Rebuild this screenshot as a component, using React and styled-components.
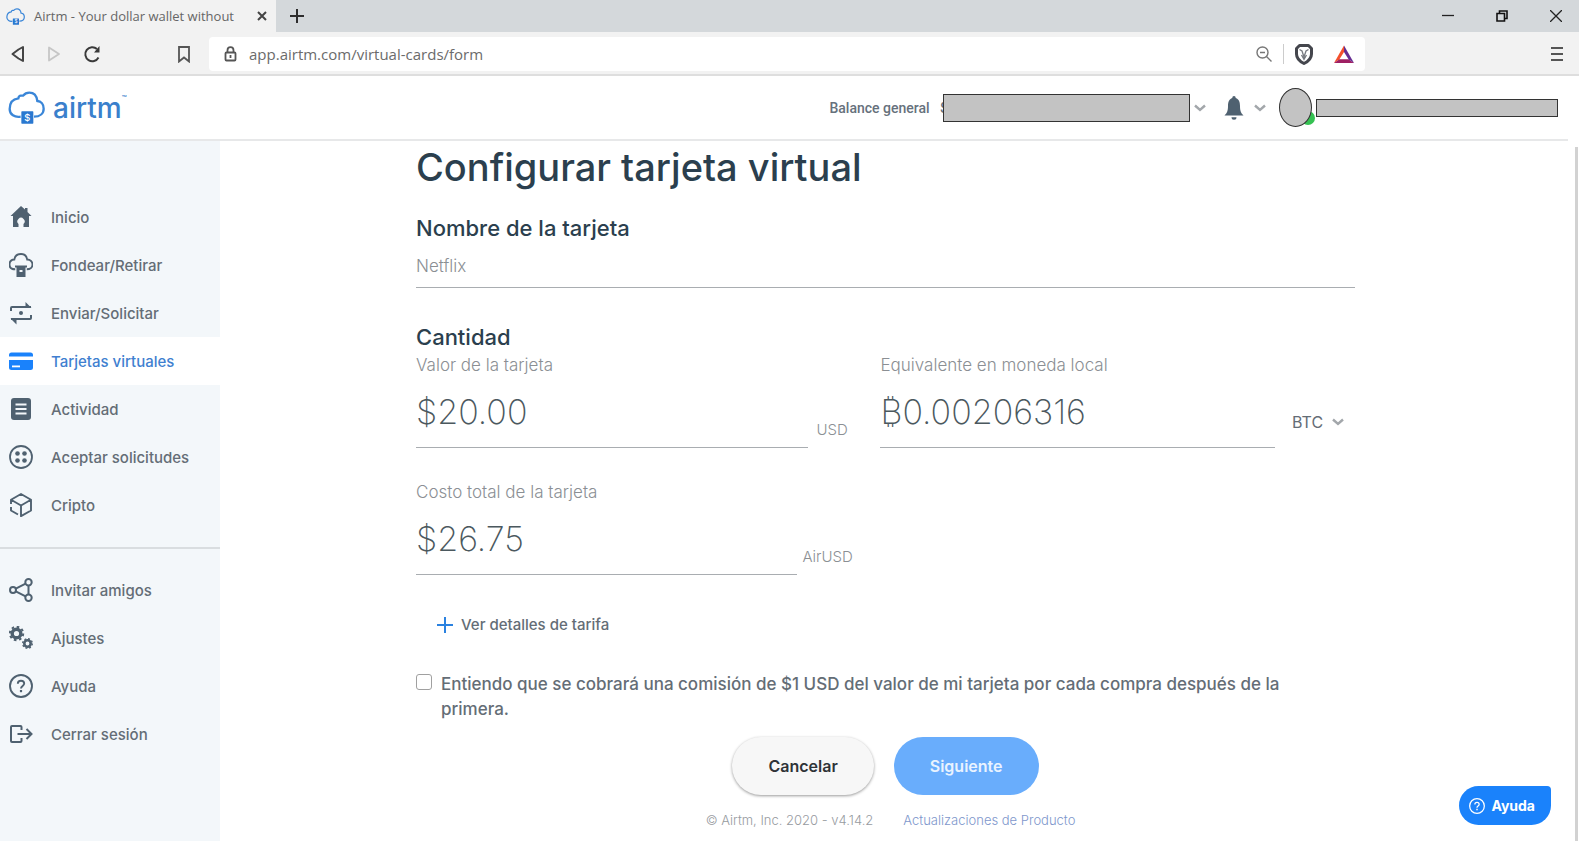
import React, { useState } from "react";
import styled, { createGlobalStyle } from "styled-components";

const colors = {
  blue: "#1a82fb",
  link: "#3f7fd0",
  dark: "#2b3f4e",
  icon: "#4f6170",
  text: "#646d76",
  light: "#8b8f94",
  line: "#a9adb1",
};

const CloudLogo = ({ width, height }) => (
  <svg width={width} height={height} viewBox="0 0 111 99" fill="none" aria-hidden="true">
    <path
      d="M38 77C20 80 5 71 5 54C5 36 14 24 31 22C32 17 34 14 38 14H45C50 8 56 5 64 5C77 5 86 14 88 30C99 31 107 40 107 53C107 67 96 77 78 77"
      stroke="#3a86d8"
      strokeWidth="7"
    />
    <rect x="40" y="61" width="36" height="37" rx="2" fill="#2a78d0" />
    <text x="58" y="90" fill="#fff" fontSize="28" fontFamily="Inter, sans-serif" textAnchor="middle">
      $
    </text>
  </svg>
);

const Chevron = () => (
  <svg width="12" height="8" viewBox="0 0 12 8" fill="none" stroke="#a3a7ab" strokeWidth="2.400" aria-hidden="true">
    <path d="M1 1.500L6 6L11 1.500" />
  </svg>
);

const icons = {
  home: (
    <g fill="currentColor">
      <path d="M12 1L1.500 11H4v11h5.500v-3a3.600 3.600 0 1 1 5 0v3H20V11h2.500L18.500 7V3H16v1.600z" />
    </g>
  ),
  fund: (
    <g fill="none" stroke="currentColor" strokeWidth="2">
      <path d="M6.500 17C3 17 .5 15.200 .5 12C.5 9 2.600 7 5.500 6.800C6 3 9 1 12.500 1C16 1 18.500 3.400 19 6.800C22 7 24.500 9 24.500 12C24.500 15 22 17 18.500 17" transform="scale(.96)" />
      <path d="M6 13.500h12" />
      <path d="M8.500 14v9h7v-9" fill="currentColor" />
      <path d="M10.500 18h3" stroke="#f3f7fa" />
    </g>
  ),
  send: (
    <g fill="none" stroke="currentColor" strokeWidth="2">
      <path d="M2 10V7a1 1 0 0 1 1-1H22" />
      <path d="M16.500 1l6 6h-6z" fill="currentColor" stroke="none" />
      <path d="M22 14v3a1 1 0 0 1-1 1H2" />
      <path d="M7.500 23.500l-6-6h6z" fill="currentColor" stroke="none" />
      <circle cx="12" cy="12" r="2" fill="currentColor" stroke="none" />
    </g>
  ),
  card: (
    <g fill="currentColor">
      <path d="M0 7.500V6a2.500 2.500 0 0 1 2.500-2.500h19A2.500 2.500 0 0 1 24 6v1.500z" />
      <path d="M0 11h24v7.500a2.500 2.500 0 0 1-2.500 2.500h-19A2.500 2.500 0 0 1 0 18.500z" />
      <path d="M3 16.500h8v1.800H3z" fill="#fff" />
    </g>
  ),
  activity: (
    <g>
      <rect x="2" y="1" width="20" height="22" rx="3" fill="currentColor" />
      <path d="M6.500 7.500h11M6.500 12h11M6.500 16.500h11" stroke="#f3f7fa" strokeWidth="1.800" />
    </g>
  ),
  requests: (
    <g fill="currentColor">
      <circle cx="12" cy="12" r="11" fill="none" stroke="currentColor" strokeWidth="1.800" />
      <circle cx="8.500" cy="8.500" r="2.300" />
      <circle cx="15.500" cy="8.500" r="2.300" />
      <circle cx="8.500" cy="15.500" r="2.300" />
      <circle cx="15.500" cy="15.500" r="2.300" />
    </g>
  ),
  crypto: (
    <g fill="none" stroke="currentColor" strokeWidth="1.900" strokeLinejoin="round">
      <path d="M2 11V6.800L12 1L22 6.800V17.500L12 23.200V12.500L2.500 7M12 12.500L21.500 7" />
      <path d="M2 14v3.500L9 21.500" />
    </g>
  ),
  invite: (
    <g fill="none" stroke="currentColor" strokeWidth="2">
      <circle cx="4" cy="12" r="3" />
      <circle cx="19.500" cy="4.200" r="3.200" />
      <circle cx="19.500" cy="19.800" r="3.200" />
      <path d="M6.800 10.600L16.600 5.700M6.800 13.400L16.600 18.300M19.500 7.400v9.200" />
    </g>
  ),
  settings: (
    <g fill="none" stroke="currentColor">
      <circle cx="7.500" cy="7.500" r="4.300" strokeWidth="3.400" />
      <circle cx="7.500" cy="7.500" r="6.700" strokeWidth="2" strokeDasharray="2.600 2.662" />
      <circle cx="18.500" cy="17.500" r="3.200" strokeWidth="2.600" />
      <circle cx="18.500" cy="17.500" r="4.800" strokeWidth="1.400" strokeDasharray="1.900 1.870" />
    </g>
  ),
  help: (
    <g fill="none" stroke="currentColor" strokeWidth="1.900">
      <circle cx="12" cy="12" r="11" />
      <path d="M8.800 9.800C8.800 7.800 10.200 6.700 12 6.700C13.900 6.700 15.200 7.900 15.200 9.600C15.200 12 12 12 12 14.500" />
      <path d="M12 16v2.200" strokeWidth="2.200" />
    </g>
  ),
  logout: (
    <g fill="none" stroke="currentColor" strokeWidth="2">
      <path d="M12.500 8V5a1 1 0 0 0-1-1H3a1 1 0 0 0-1 1v14a1 1 0 0 0 1 1h8.500a1 1 0 0 0 1-1v-3" />
      <path d="M8.500 12H22M17.500 7L22.500 12L17.500 17" />
    </g>
  ),
};

const mainLinks = [
  { icon: "home", label: "Inicio" },
  { icon: "fund", label: "Fondear/Retirar" },
  { icon: "send", label: "Enviar/Solicitar" },
  { icon: "card", label: "Tarjetas virtuales", active: true },
  { icon: "activity", label: "Actividad" },
  { icon: "requests", label: "Aceptar solicitudes" },
  { icon: "crypto", label: "Cripto" },
];

const moreLinks = [
  { icon: "invite", label: "Invitar amigos" },
  { icon: "settings", label: "Ajustes" },
  { icon: "help", label: "Ayuda" },
  { icon: "logout", label: "Cerrar sesión" },
];

const NavLinks = ({ links }) =>
  links.map(({ icon, label, active }) => (
    <NavItem key={label} href="#" $active={active}>
      <svg width="24" height="24" viewBox="0 0 24 24" aria-hidden="true">
        {icons[icon]}
      </svg>
      {label}
    </NavItem>
  ));

const Browser = () => (
  <>
    <TabBar>
      <Tab>
        <CloudLogo width={19} height={17} />
        <TabTitle>Airtm - Your dollar wallet without</TabTitle>
        <IconButton aria-label="Close tab">
          <svg width="10" height="10" viewBox="0 0 10 10" stroke="#444" strokeWidth="2">
            <path d="M1 1L9 9M9 1L1 9" />
          </svg>
        </IconButton>
      </Tab>
      <IconButton aria-label="New tab">
        <svg width="14" height="14" viewBox="0 0 14 14" stroke="#2d2d2d" strokeWidth="2">
          <path d="M7 0V14M0 7H14" />
        </svg>
      </IconButton>
      <WindowButtons>
        <IconButton aria-label="Minimize">
          <svg width="12" height="12" viewBox="0 0 12 12" stroke="#222" strokeWidth="1.300">
            <path d="M0 5.500H12" />
          </svg>
        </IconButton>
        <IconButton aria-label="Restore">
          <svg width="12" height="12" viewBox="0 0 12 12" fill="none" stroke="#111" strokeWidth="1.600">
            <path d="M1 3.500H8.500V11H1zM3.500 3V1H11V8.500H9" />
          </svg>
        </IconButton>
        <IconButton aria-label="Close">
          <svg width="12" height="12" viewBox="0 0 12 12" stroke="#222" strokeWidth="1.300">
            <path d="M0 0L12 12M12 0L0 12" />
          </svg>
        </IconButton>
      </WindowButtons>
    </TabBar>
    <Toolbar>
      <ToolbarNav>
        <IconButton aria-label="Back">
          <svg width="14" height="18" viewBox="0 0 14 18" fill="none" stroke="#444" strokeWidth="2" strokeLinejoin="round">
            <path d="M12 2V16L7.500 13.500L1.500 9L7.500 4.500z" />
          </svg>
        </IconButton>
        <IconButton aria-label="Forward">
          <svg width="14" height="18" viewBox="0 0 14 18" fill="none" stroke="#c6c6c6" strokeWidth="1.800" strokeLinejoin="round">
            <path d="M2 2.500V15.500L12 9z" />
          </svg>
        </IconButton>
        <IconButton aria-label="Reload">
          <svg width="18" height="18" viewBox="0 0 18 18" fill="none" stroke="#3a3a3a" strokeWidth="2">
            <path d="M15.500 12.500A7 7 0 1 1 14 4" />
            <path d="M16.500 1V7.500H11z" fill="#3a3a3a" stroke="none" />
          </svg>
        </IconButton>
      </ToolbarNav>
      <IconButton aria-label="Bookmark">
        <svg width="12" height="17" viewBox="0 0 12 17" fill="none" stroke="#555" strokeWidth="1.800">
          <path d="M1 1H11V15.500L6 11.500L1 15.500z" />
        </svg>
      </IconButton>
      <AddressBar>
        <svg width="13" height="16" viewBox="0 0 13 16" fill="none" stroke="#555" strokeWidth="1.800" aria-hidden="true">
          <rect x="1.500" y="6.500" width="10" height="8" rx="1" />
          <path d="M3.500 6.500V4.200a3 3 0 0 1 6 0V6.500M6.500 9v3" />
        </svg>
        <Url aria-label="Address" defaultValue="app.airtm.com/virtual-cards/form" />
        <IconButton aria-label="Zoom">
          <svg width="16" height="16" viewBox="0 0 16 16" fill="none" stroke="#777" strokeWidth="1.400">
            <circle cx="6.500" cy="6.500" r="5.500" />
            <path d="M4 6.500H9M10.500 10.500L15.500 15.500" />
          </svg>
        </IconButton>
        <BarDivider />
        <IconButton aria-label="Brave Shields">
          <svg width="18" height="21" viewBox="0 0 18 21" fill="none">
            <path
              d="M4.500 1.500H13.500L16.500 4.500V10C16.500 14.500 13 17.500 9 19.500C5 17.500 1.500 14.500 1.500 10V4.500z"
              fill="#fff"
              stroke="#44464d"
              strokeWidth="3"
              strokeLinejoin="round"
            />
            <path d="M4.500 5.500L7 7L9 13L11 7L13.500 5.500M6.500 11L9 15.500L11.500 11" stroke="#777a80" strokeWidth="1.300" />
          </svg>
        </IconButton>
        <IconButton aria-label="Brave Rewards">
          <svg width="22" height="19" viewBox="0 0 22 19">
            <path d="M11 .5L1 18L6.500 14.300L11 7z" fill="#f4512c" />
            <path d="M1 18H21L15.500 14.300H6.500z" fill="#9e1f63" />
            <path d="M11 .5L21 18L15.500 14.300L11 7z" fill="#662d91" />
          </svg>
        </IconButton>
      </AddressBar>
      <IconButton aria-label="Menu">
        <svg width="12" height="14" viewBox="0 0 12 14" stroke="#555" strokeWidth="2">
          <path d="M0 1H12M0 7H12M0 13H12" />
        </svg>
      </IconButton>
    </Toolbar>
  </>
);

const App = () => {
  const [accepted, setAccepted] = useState(false);

  return (
    <Page>
      <GlobalStyle />
      <Browser />
      <Header>
        <Brand href="#">
          <CloudLogo width={37} height={33} />
          airtm<sup>™</sup>
        </Brand>
        <Account>
          <Balance>
            Balance general <span>$</span>
          </Balance>
          <BalanceMask />
          <PlainButton aria-label="Balance">
            <Chevron />
          </PlainButton>
          <BellButton aria-label="Notificaciones">
            <svg width="20" height="24" viewBox="0 0 20 24" fill={colors.icon}>
              <path d="M10 0C8.900 0 8.300 .8 8.300 1.900C5 3 4 6 4 10C4 15 3 17 .500 19.500H19.500C17 17 16 15 16 10C16 6 15 3 11.700 1.900C11.700 .8 11.100 0 10 0z" />
              <path d="M7.500 21.300h5a2.500 2.500 0 0 1-5 0z" />
            </svg>
            <Chevron />
          </BellButton>
          <Avatar />
          <NameMask />
        </Account>
      </Header>
      <Body>
        <Sidebar>
          <nav>
            <NavLinks links={mainLinks} />
            <Divider />
            <NavLinks links={moreLinks} />
          </nav>
        </Sidebar>
        <Main>
          <Form onSubmit={(e) => e.preventDefault()}>
            <h1>Configurar tarjeta virtual</h1>
            <Subtitle as="label" htmlFor="name">
              Nombre de la tarjeta
            </Subtitle>
            <NameInput id="name" placeholder="Netflix" />
            <Subtitle>Cantidad</Subtitle>
            <Amounts>
              <div>
                <Label htmlFor="value">Valor de la tarjeta</Label>
                <AmountRow>
                  <AmountInput id="value" defaultValue="$20.00" />
                  <Unit $wide>USD</Unit>
                </AmountRow>
              </div>
              <div>
                <Label htmlFor="local">Equivalente en moneda local</Label>
                <AmountRow>
                  <AmountInput id="local" defaultValue="₿0.00206316" />
                  <Currency>
                    <select aria-label="Moneda local">
                      <option>BTC</option>
                    </select>
                    <Chevron />
                  </Currency>
                </AmountRow>
              </div>
              <div>
                <Label htmlFor="total">Costo total de la tarjeta</Label>
                <AmountRow>
                  <AmountInput id="total" defaultValue="$26.75" readOnly />
                  <Unit>AirUSD</Unit>
                </AmountRow>
              </div>
            </Amounts>
            <DetailsButton type="button">
              <svg width="16" height="16" viewBox="0 0 16 16" stroke="#2b82e0" strokeWidth="2" aria-hidden="true">
                <path d="M8 0V16M0 8H16" />
              </svg>
              Ver detalles de tarifa
            </DetailsButton>
            <Terms>
              <input type="checkbox" checked={accepted} onChange={(e) => setAccepted(e.target.checked)} />
              <span>
                Entiendo que se cobrará una comisión de $1 USD del valor de mi tarjeta por cada compra después de la
                primera.
              </span>
            </Terms>
            <Actions>
              <ActionButton type="button">Cancelar</ActionButton>
              <ActionButton type="submit" $primary>
                Siguiente
              </ActionButton>
            </Actions>
          </Form>
          <Footer>
            <span>© Airtm, Inc. 2020 - v4.14.2</span>
            <a href="#">Actualizaciones de Producto</a>
          </Footer>
        </Main>
        <ScrollThumb />
      </Body>
      <HelpButton>
        <svg width="16" height="16" viewBox="0 0 24 24" aria-hidden="true">
          {icons.help}
        </svg>
        Ayuda
      </HelpButton>
    </Page>
  );
};

export default App;

const GlobalStyle = createGlobalStyle`
  * {
    box-sizing: border-box;
  }
  body {
    margin: 0;
    background: #fff;
    color: ${colors.text};
    font-family: Inter, "Liberation Sans", sans-serif;
    font-size: 15px;
  }
  button, input, select {
    font: inherit;
    color: inherit;
  }
`;

const Page = styled.div`
  display: flex;
  flex-direction: column;
  min-height: 100vh;
`;

const PlainButton = styled.button`
  display: flex;
  align-items: center;
  padding: 0;
  border: 0;
  background: none;
  cursor: pointer;
`;

const IconButton = styled(PlainButton)`
  flex: none;
`;

const TabBar = styled.div`
  display: flex;
  align-items: center;
  height: 32px;
  background: #d4d8db;
  font-family: "Open Sans", "Noto Sans", sans-serif;
`;

const Tab = styled.div`
  display: flex;
  align-items: center;
  flex: none;
  width: 276px;
  height: 32px;
  margin-right: 14px;
  padding: 0 9px 0 6px;
  background: #f2f2f2;
`;

const TabTitle = styled.span`
  flex: 1;
  margin-left: 9px;
  white-space: nowrap;
  font-size: 13px;
  color: #666;
`;

const WindowButtons = styled.div`
  display: flex;
  gap: 42px;
  margin-left: auto;
  padding-right: 17px;
`;

const Toolbar = styled.div`
  display: flex;
  align-items: center;
  height: 44px;
  padding: 2px 16px 0 11px;
  border-bottom: 2px solid #dedede;
  background: #f2f2f2;
`;

const ToolbarNav = styled.div`
  display: flex;
  gap: 22px;
  margin-right: 77px;
`;

const AddressBar = styled.div`
  flex: 1;
  display: flex;
  align-items: center;
  height: 34px;
  margin: 0 186px 0 19px;
  padding: 0 10px 0 15px;
  border-radius: 4px;
  background: #fff;
`;

const Url = styled.input`
  flex: 1;
  min-width: 0;
  padding: 0 12px;
  border: 0;
  outline: 0;
  color: #6b6b6b;
  font-family: "Open Sans", "Noto Sans", sans-serif;
  font-size: 15px;
`;

const BarDivider = styled.i`
  width: 1px;
  height: 20px;
  margin: 0 11px;
  background: #ccc;

  & + button {
    margin-right: 20px;
  }
`;

const Header = styled.header`
  display: flex;
  align-items: center;
  justify-content: space-between;
  height: 65px;
  margin-right: 11px;
  padding: 0 10px 0 8px;
  border-bottom: 2px solid #e7e8e9;
`;

const Brand = styled.a`
  display: flex;
  align-items: center;
  color: #3a80cc;
  font-size: 28px;
  font-weight: 500;
  text-decoration: none;

  svg {
    margin-right: 8px;
  }
  sup {
    align-self: flex-start;
    font-size: 8px;
    line-height: 14px;
  }
`;

const Account = styled.div`
  display: flex;
  align-items: center;
`;

const Balance = styled.span`
  color: #66717c;
  font-family: Roboto, "Liberation Sans", sans-serif;
  font-size: 14px;
  font-weight: 500;

  span {
    margin-left: 7px;
  }
`;

const Mask = styled.div`
  border: 1px solid #333;
  background: #c3c3c3;
`;

/* covers the amount right after the dollar sign */
const BalanceMask = styled(Mask)`
  position: relative;
  width: 247px;
  height: 28px;
  margin: 0 4px 0 -5px;
`;

const BellButton = styled(PlainButton)`
  gap: 10px;
  margin: 0 13px 0 18px;
`;

const Avatar = styled(Mask)`
  position: relative;
  width: 33px;
  height: 39px;
  margin-right: 4px;
  border-radius: 50%;

  &::after {
    content: "";
    position: absolute;
    right: -4px;
    bottom: 1px;
    z-index: -1;
    width: 14px;
    height: 14px;
    border-radius: 50%;
    background: #35c152;
  }
`;

const NameMask = styled(Mask)`
  width: 242px;
  height: 18px;
`;

const Body = styled.div`
  flex: 1;
  display: flex;
`;

const Sidebar = styled.aside`
  flex: none;
  width: 220px;
  padding-top: 52px;
  background: #f3f7fa;
`;

const NavItem = styled.a`
  display: flex;
  align-items: center;
  gap: 18px;
  height: 48px;
  padding-left: 9px;
  background: ${(props) => (props.$active ? "#fff" : "none")};
  color: ${(props) => (props.$active ? colors.link : colors.text)};
  font-weight: 500;
  text-decoration: none;

  svg {
    color: ${(props) => (props.$active ? colors.blue : colors.icon)};
  }
`;

const Divider = styled.hr`
  height: 2px;
  margin: 18px 0 17px;
  border: 0;
  background: #d9dde0;
`;

const Main = styled.main`
  flex: 1;
  min-width: 0;
  padding: 0 220px 0 196px;
`;

const Form = styled.form`
  h1 {
    margin: 0 0 23px;
    color: ${colors.dark};
    font-size: 38px;
    font-weight: 500;
    line-height: 52px;
  }
`;

const Subtitle = styled.h2`
  display: block;
  margin: 0;
  color: ${colors.dark};
  font-size: 22px;
  font-weight: 500;
  line-height: 24px;
`;

const NameInput = styled.input`
  display: block;
  width: 100%;
  height: 48px;
  margin-bottom: 37px;
  padding: 4px 0 0;
  border: 0;
  border-bottom: 1px solid ${colors.line};
  outline: 0;
  font-size: 17px;
  font-weight: 300;

  &::placeholder {
    color: ${colors.light};
  }
`;

const Amounts = styled.div`
  display: grid;
  grid-template-columns: minmax(0, 436fr) minmax(0, 474fr);
  gap: 28px;
`;

const Label = styled.label`
  display: block;
  color: ${colors.light};
  font-size: 17px;
  font-weight: 300;
  line-height: 33px;
`;

const AmountRow = styled.div`
  display: flex;
  align-items: flex-end;
`;

const AmountInput = styled.input`
  flex: 1;
  min-width: 0;
  height: 66px;
  padding: 0 0 6px;
  border: 0;
  border-bottom: 1px solid ${colors.line};
  outline: 0;
  color: #4b585e;
  font-size: 34px;
  font-weight: 200;
`;

const Unit = styled.span`
  width: ${(props) => (props.$wide ? "44px" : "55px")};
  padding: 0 0 8px ${(props) => (props.$wide ? "8px" : "5px")};
  color: ${colors.light};
  font-weight: 300;
  line-height: 20px;
`;

const Currency = styled.div`
  display: flex;
  align-items: center;
  width: 80px;
  padding: 0 0 16px 17px;

  select {
    width: 40px;
    padding: 0;
    border: 0;
    outline: 0;
    appearance: none;
    background: none;
    font-size: 16px;
  }
`;

const DetailsButton = styled(PlainButton)`
  gap: 8px;
  margin: 40px 0 0 21px;
  font-weight: 500;
  line-height: 20px;
`;

const Terms = styled.label`
  display: flex;
  gap: 9px;
  margin-top: 37px;
  padding-right: 40px;
  font-size: 17px;
  font-weight: 500;
  line-height: 25px;

  input {
    flex: none;
    width: 16px;
    height: 16px;
    margin: 2px 0 0;
    border: 1px solid #a0a0a0;
    border-radius: 3px;
    appearance: none;
    background: #fff;
  }
  input:checked {
    background: ${colors.blue};
  }
`;

const Actions = styled.div`
  display: flex;
  justify-content: center;
  gap: 20px;
  margin-top: 15px;
`;

const ActionButton = styled.button`
  height: 58px;
  padding: 0 36px;
  border: 0;
  border-radius: 29px;
  background: ${(props) => (props.$primary ? "#69adfc" : "#f7f7f7")};
  box-shadow: ${(props) => (props.$primary ? "none" : "0 1px 3px rgba(0, 0, 0, 0.4)")};
  color: ${(props) => (props.$primary ? "#e9f3ff" : "#2f3338")};
  font-size: 16px;
  font-weight: 600;
  cursor: pointer;
`;

const Footer = styled.footer`
  display: flex;
  justify-content: center;
  gap: 30px;
  padding: 16px 0 14px 10px;
  color: #979b9f;
  font-size: 13px;
  font-weight: 300;
  line-height: 18px;

  a {
    color: #7e97cc;
    text-decoration: none;
  }
`;

const ScrollThumb = styled.div`
  width: 3px;
  margin: 6px 1px 0 0;
  background: #d2d2d2;
`;

const HelpButton = styled.button`
  position: fixed;
  right: 28px;
  bottom: 16px;
  display: flex;
  align-items: center;
  gap: 6px;
  height: 39px;
  padding: 0 16px 0 10px;
  border: 0;
  border-radius: 20px 4px 20px 20px;
  background: ${colors.blue};
  color: #fff;
  font-size: 14px;
  font-weight: 700;
  cursor: pointer;
`;
